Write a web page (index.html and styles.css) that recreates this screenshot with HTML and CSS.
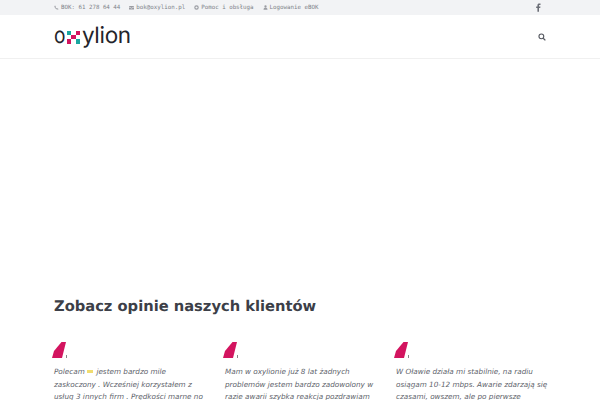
FILE: index.html
```html
<!DOCTYPE html>
<html lang="pl">
<head>
<meta charset="utf-8">
<title>Oxylion</title>
<link rel="stylesheet" href="styles.css">
</head>
<body>
<div class="topbar">
  <div class="wrap topbar-in">
    <div class="contacts">
      <span class="contact"><svg class="ic" viewBox="0 0 10 10"><path d="M2.2 1 L3.6 3 L2.9 3.9 C3.4 5.2 4.8 6.6 6.1 7.1 L7 6.4 L9 7.8 C8.6 9 7.6 9.4 6.6 9.1 C4 8.3 1.7 6 .9 3.4 C.6 2.4 1 1.4 2.2 1Z"/></svg>BOK: 61 278 64 44</span>
      <span class="contact"><svg class="ic" viewBox="0 0 10 10"><path d="M0 2h10v1.2L5 6 0 3.2zM0 4.3 5 7l5-2.700V9H0z"/></svg>bok@oxylion.pl</span>
      <span class="contact"><svg class="ic" viewBox="0 0 10 10"><path fill-rule="evenodd" d="M5 .5a4.5 4.5 0 1 0 0 9 4.5 4.5 0 0 0 0-9zm0 2.300a2.200 2.200 0 1 1 0 4.400 2.200 2.200 0 0 1 0-4.400z"/></svg>Pomoc i obsługa</span>
      <span class="contact"><svg class="ic" viewBox="0 0 10 10"><circle cx="5" cy="3" r="2.300"/><path d="M1 9.500C1 6.800 2.500 5.600 5 5.600s4 1.200 4 3.900z"/></svg>Logowanie eBOK</span>
    </div>
    <svg class="fb" viewBox="0 0 6 10"><path d="M1.700 10V5.600H.2V3.800h1.500V2.500C1.700 1 2.600.2 4 .2c.6 0 1.200 0 1.400.1v1.600h-.9c-.8 0-.9.4-.9.9v1h1.700l-.2 1.800H3.600V10z"/></svg>
  </div>
</div>
<header class="nav">
  <div class="wrap nav-in">
    <div class="logo"><span class="logo-o">o</span><span class="logo-x"><i class="tl"></i><i></i><i class="pk"></i><i></i><i class="pk"></i><i></i><i class="pk"></i><i></i><i class="tl"></i></span><span>ylion</span></div>
    <svg class="search" viewBox="0 0 10 10"><circle cx="4.200" cy="4.200" r="3" fill="none" stroke="#555860" stroke-width="1.400"/><path d="M6.500 6.500 9.200 9.200" stroke="#555860" stroke-width="1.600"/></svg>
  </div>
</header>
<main class="wrap opinions">
  <h2>Zobacz opinie naszych klientów</h2>
  <div class="cards">
    <article class="card">
      <div class="quote"><svg viewBox="0 0 14 16"><path d="M0 16 2 9 9.500 0H14L10 16z"/></svg><span class="dot"></span></div>
      <p>Polecam <span class="emoji"></span> jestem bardzo mile zaskoczony . Wcześniej korzystałem z usług 3 innych firm . Prędkości marne no</p>
    </article>
    <article class="card">
      <div class="quote"><svg viewBox="0 0 14 16"><path d="M0 16 2 9 9.500 0H14L10 16z"/></svg><span class="dot"></span></div>
      <p>Mam w oxylionie już 8 lat żadnych problemów jestem bardzo zadowolony w razie awarii szybka reakcja pozdrawiam</p>
    </article>
    <article class="card">
      <div class="quote"><svg viewBox="0 0 14 16"><path d="M0 16 2 9 9.500 0H14L10 16z"/></svg><span class="dot"></span></div>
      <p>W Oławie działa mi stabilnie, na radiu osiągam 10-12 mbps. Awarie zdarzają się czasami, owszem, ale po pierwsze</p>
    </article>
  </div>
</main>
</body>
</html>
```
FILE: styles.css
```css
* { box-sizing: border-box; }
html, body { margin: 0; height: 400px; overflow: hidden; background: #fff; }
body { font-family: "DejaVu Sans", sans-serif; color: #555; text-rendering: geometricPrecision; }
.wrap { width: 492px; margin: 0 auto 0 54px; }
.topbar { height: 15px; background: #f2f3f5; }
.topbar-in { display: flex; justify-content: space-between; align-items: center; height: 15px; }
.contacts { display: flex; gap: 9px; font-family: "DejaVu Sans Mono", monospace; font-size: 5.800px; color: #80838a; }
.contact { display: flex; align-items: center; gap: 2px; white-space: nowrap; }
.ic { width: 5px; height: 5px; fill: #9a9ca2; }
.fb { width: 5px; height: 9px; fill: #6b6e76; margin-right: 5px; }
.nav { height: 44px; border-bottom: 1px solid #f0f0f0; }
.nav-in { display: flex; justify-content: space-between; align-items: center; height: 43px; }
.logo { display: flex; align-items: baseline; height: 26px; margin-top: -2px; font-family: "Inter", sans-serif; font-size: 22.500px; line-height: 26px; color: #23242a; letter-spacing: -.3px; }
.logo-o { display: inline-block; width: 12px; transform: scaleX(.85); transform-origin: left center; }
.logo-x { display: grid; grid-template-columns: repeat(3, 4.300px); grid-auto-rows: 4.300px; align-self: flex-end; margin: 0 2px 5px 1px; }
.logo-x i { display: block; }
.logo-x .pk { background: #d3145f; }
.logo-x .tl { background: #1aa6a0; }
.search { width: 8px; height: 8px; margin-top: 1px; }
.opinions { padding-top: 237px; }
h2 { margin: 0; font-size: 14.700px; line-height: 22px; font-weight: 700; color: #3c3f48; }
.cards { display: grid; grid-template-columns: repeat(3, 152px); gap: 0 19px; margin-top: 24px; }
.quote { display: flex; align-items: flex-end; height: 16px; }
.quote svg { width: 14px; height: 16px; fill: #d3145f; margin-left: -2px; }
.dot { width: 1px; height: 3px; background: #888; }
p { margin: 8px 0 0; font-size: 7.250px; line-height: 12.500px; font-style: italic; color: #60636b; }
.emoji { display: inline-block; width: 6px; height: 3px; margin-right: 1px; background: #f0dc70; vertical-align: 1px; }
```
